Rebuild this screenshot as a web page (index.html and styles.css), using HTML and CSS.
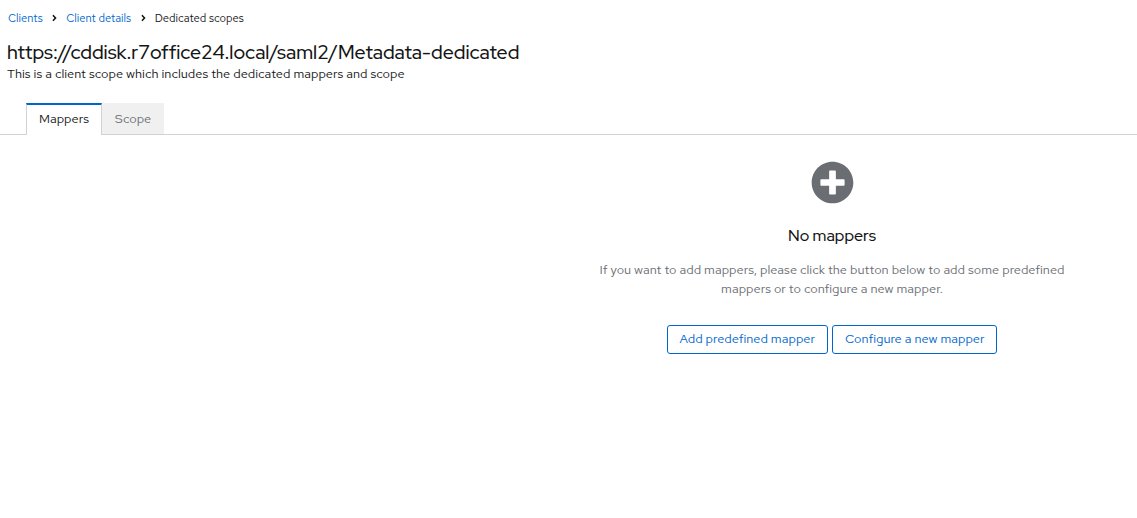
FILE: index.html
```html
<!DOCTYPE html>
<html lang="en">
<head>
  <meta charset="UTF-8" />
  <title>Dedicated scopes</title>
  <link rel="stylesheet" href="styles.css">
</head>
<body>
  <nav class="breadcrumb">
    <a href="#">Clients</a>
    <svg class="crumb-sep" viewBox="0 0 256 512"><path d="M224.300 273l-136 136c-9.400 9.400-24.600 9.400-33.900 0l-22.600-22.600c-9.400-9.400-9.400-24.600 0-33.900l96.400-96.400-96.400-96.400c-9.400-9.400-9.400-24.600 0-33.900L54.300 103c9.400-9.400 24.600-9.400 33.900 0l136 136c9.500 9.400 9.500 24.600.1 34z"/></svg>
    <a href="#">Client details</a>
    <svg class="crumb-sep" viewBox="0 0 256 512"><path d="M224.300 273l-136 136c-9.400 9.400-24.600 9.400-33.900 0l-22.600-22.600c-9.400-9.400-9.400-24.600 0-33.900l96.400-96.400-96.400-96.400c-9.400-9.400-9.400-24.600 0-33.900L54.300 103c9.400-9.400 24.600-9.400 33.900 0l136 136c9.500 9.400 9.500 24.600.1 34z"/></svg>
    <span>Dedicated scopes</span>
  </nav>
  <header class="page-head">
    <h1>https://cddisk.r7office24.local/saml2/Metadata-dedicated</h1>
    <p>This is a client scope which includes the dedicated mappers and scope</p>
  </header>
  <div class="tabs">
    <button class="tab active">Mappers</button>
    <button class="tab">Scope</button>
  </div>
  <main class="empty">
    <svg class="empty-icon" viewBox="0 0 512 512"><path d="M256 8C119 8 8 119 8 256s111 248 248 248 248-111 248-248S393 8 256 8zm144 276c0 6.600-5.400 12-12 12h-92v92c0 6.600-5.400 12-12 12h-56c-6.600 0-12-5.400-12-12v-92h-92c-6.600 0-12-5.400-12-12v-56c0-6.600 5.400-12 12-12h92v-92c0-6.600 5.400-12 12-12h56c6.600 0 12 5.400 12 12v92h92c6.600 0 12 5.400 12 12v56z"/></svg>
    <h2>No mappers</h2>
    <p>If you want to add mappers, please click the button below to add some predefined mappers or to configure a new mapper.</p>
    <div class="actions">
      <button class="btn">Add predefined mapper</button>
      <button class="btn">Configure a new mapper</button>
    </div>
  </main>
</body>
</html>
```

FILE: styles.css
```css
body {
  margin: 0;
  font-family: "Red Hat Text", "Open Sans", "Noto Sans", sans-serif;
  font-size: 12.8px;
  color: #151515;
  background: #fff;
}
.breadcrumb {
  display: flex;
  align-items: center;
  padding: 9px 8px 0;
  height: 18px;
  font-size: 11.2px;
}
.breadcrumb a {
  color: #0066cc;
  text-decoration: none;
}
.crumb-sep {
  width: 5px;
  height: 10px;
  margin: 0 9px 0 9.5px;
  fill: #151515;
}
.page-head {
  padding: 12px 7px 0;
}
.page-head h1 {
  margin: 0;
  font-family: "Red Hat Display", "Inter", sans-serif;
  font-size: 19.5px;
  font-weight: 500;
  line-height: 27px;
}
.page-head p {
  margin: 0;
  line-height: 16px;
}
.tabs {
  display: flex;
  margin-top: 21px;
  padding-left: 26px;
  border-bottom: 1px solid #d2d2d2;
}
.tab {
  width: 62px;
  height: 31px;
  padding: 0 0 1px;
  border: 0;
  background: #f0f0f0;
  color: #6a6e73;
  font: inherit;
}
.tab.active {
  width: 76px;
  height: 32px;
  margin-bottom: -1px;
  padding: 0 0 4px;
  background: #fff;
  color: #151515;
  border-top: 2px solid #0066cc;
  border-left: 1px solid #d2d2d2;
  border-right: 1px solid #d2d2d2;
}
.empty {
  width: 480px;
  margin-left: 592px;
  padding-top: 26px;
  display: flex;
  flex-direction: column;
  align-items: center;
  text-align: center;
}
.empty-icon {
  width: 43px;
  height: 43px;
  fill: #6a6e73;
}
.empty h2 {
  margin: 22px 0 0;
  font-family: "Red Hat Display", "Inter", sans-serif;
  font-size: 16px;
  font-weight: 500;
  line-height: 20px;
}
.empty p {
  margin: 14px 0 0;
  color: #6a6e73;
  line-height: 19px;
}
.actions {
  display: flex;
  gap: 4px;
  margin-top: 27px;
}
.btn {
  height: 29px;
  padding: 0 12px 2px;
  background: #fff;
  border: 1px solid #0066cc;
  border-radius: 3px;
  color: #0066cc;
  font: inherit;
}
```
